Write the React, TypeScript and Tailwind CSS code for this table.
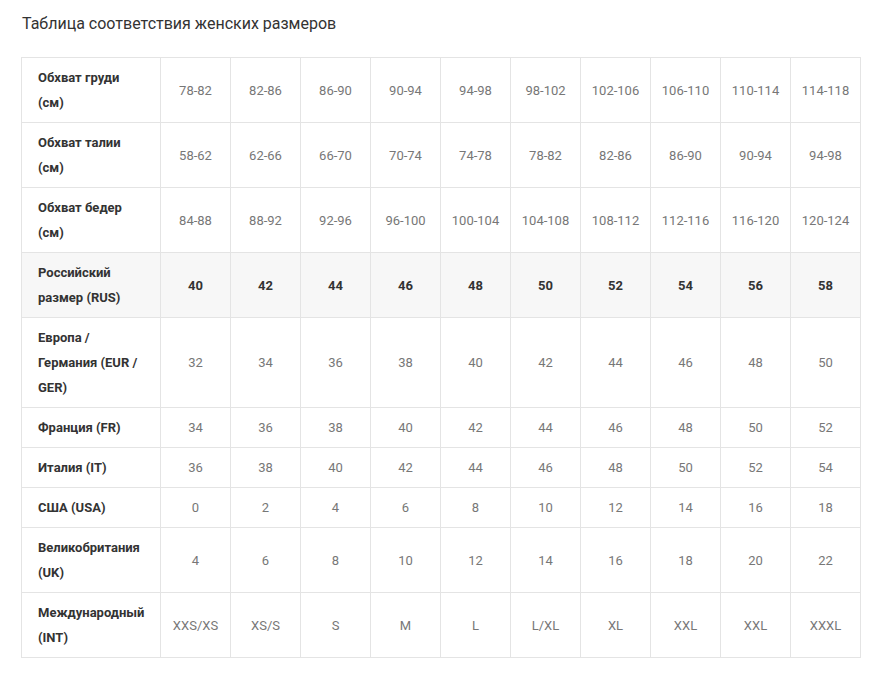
const COLS = 10

type Row = { label: string[]; values: string[]; highlight?: boolean }

const ROWS: Row[] = [
  {
    label: ['Обхват груди', '(см)'],
    values: ['78-82', '82-86', '86-90', '90-94', '94-98', '98-102', '102-106', '106-110', '110-114', '114-118'],
  },
  {
    label: ['Обхват талии', '(см)'],
    values: ['58-62', '62-66', '66-70', '70-74', '74-78', '78-82', '82-86', '86-90', '90-94', '94-98'],
  },
  {
    label: ['Обхват бедер', '(см)'],
    values: ['84-88', '88-92', '92-96', '96-100', '100-104', '104-108', '108-112', '112-116', '116-120', '120-124'],
  },
  {
    label: ['Российский', 'размер (RUS)'],
    values: ['40', '42', '44', '46', '48', '50', '52', '54', '56', '58'],
    highlight: true,
  },
  {
    label: ['Европа /', 'Германия (EUR /', 'GER)'],
    values: ['32', '34', '36', '38', '40', '42', '44', '46', '48', '50'],
  },
  {
    label: ['Франция (FR)'],
    values: ['34', '36', '38', '40', '42', '44', '46', '48', '50', '52'],
  },
  {
    label: ['Италия (IT)'],
    values: ['36', '38', '40', '42', '44', '46', '48', '50', '52', '54'],
  },
  {
    label: ['США (USA)'],
    values: ['0', '2', '4', '6', '8', '10', '12', '14', '16', '18'],
  },
  {
    label: ['Великобритания', '(UK)'],
    values: ['4', '6', '8', '10', '12', '14', '16', '18', '20', '22'],
  },
  {
    label: ['Международный', '(INT)'],
    values: ['XXS/XS', 'XS/S', 'S', 'M', 'L', 'L/XL', 'XL', 'XXL', 'XXL', 'XXXL'],
  },
]

export default function App() {
  return (
    <div className="min-h-[673px] bg-white px-[21px] pt-3 font-['Roboto','Liberation_Sans',sans-serif]">
      <h1 className="ml-px text-[16px] leading-6 font-normal text-[#333]">
        Таблица соответствия женских размеров
      </h1>
      <table className="mt-[21px] w-[840px] table-fixed border-collapse text-[13px] leading-[25px]">
        <colgroup>
          <col className="w-[139px]" />
          {Array.from({ length: COLS }).map((_, i) => (
            <col key={i} className="w-[70px]" />
          ))}
        </colgroup>
        <tbody>
          {ROWS.map((row) => (
            <tr key={row.label.join(' ')} className={row.highlight ? 'bg-[#f7f7f7]' : 'bg-white'}>
              <th className="border border-[#e4e4e4] py-[7px] pr-2 pl-4 text-left font-bold text-[#333]">
                {row.label.map((l) => (
                  <div key={l}>{l}</div>
                ))}
              </th>
              {row.values.map((v, i) => (
                <td
                  key={i}
                  className={
                    'border border-[#e4e4e4] px-0 py-[7px] text-center align-middle ' +
                    (row.highlight ? 'font-bold text-[#333]' : 'text-[#777]')
                  }
                >
                  {v}
                </td>
              ))}
            </tr>
          ))}
        </tbody>
      </table>
    </div>
  )
}
